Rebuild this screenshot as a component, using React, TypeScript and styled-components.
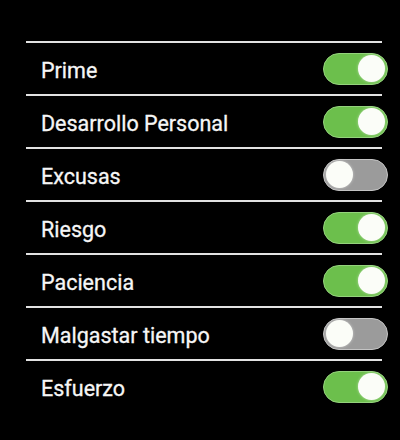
import * as React from "react";
import styled, { createGlobalStyle } from "styled-components";

const settings = [
  { label: "Prime", on: true },
  { label: "Desarrollo Personal", on: true },
  { label: "Excusas", on: false },
  { label: "Riesgo", on: true },
  { label: "Paciencia", on: true },
  { label: "Malgastar tiempo", on: false },
  { label: "Esfuerzo", on: true },
];

export default function App() {
  const [values, setValues] = React.useState(settings.map((s) => s.on));

  const flip = (i: number) =>
    setValues((v) => v.map((x, j) => (j === i ? !x : x)));

  return (
    <>
      <GlobalStyle />
      <Screen>
        <List>
          {settings.map((s, i) => (
            <Row key={s.label}>
              <Label>{s.label}</Label>
              <Toggle $on={values[i]} onClick={() => flip(i)}>
                <Knob />
              </Toggle>
            </Row>
          ))}
        </List>
      </Screen>
    </>
  );
}

const GlobalStyle = createGlobalStyle`
  html, body {
    margin: 0;
    padding: 0;
    background: #000;
  }
`;

const Screen = styled.main`
  width: 400px;
  height: 440px;
  background: #000;
  padding-top: 41px;
  box-sizing: border-box;
`;

const List = styled.ul`
  list-style: none;
  margin: 0 0 0 26px;
  padding: 0;
  width: 356px;
  border-top: solid 2px #e2e2e2;
`;

const Row = styled.li`
  display: flex;
  align-items: center;
  justify-content: space-between;
  height: 51px;
  padding: 0 0 0 15px;
  border-bottom: solid 2px #e2e2e2;

  &:last-child {
    border-bottom: none;
  }
`;

const Label = styled.span`
  font-family: Roboto, "Liberation Sans", Arial, sans-serif;
  font-size: 21.5px;
  font-weight: 400;
  color: #f6f6f6;
  margin-top: 3px;
  -webkit-text-stroke: 0.3px #f6f6f6;
`;

const Toggle = styled.button<{ $on: boolean }>`
  display: flex;
  align-items: center;
  justify-content: ${(p) => (p.$on ? "flex-end" : "flex-start")};
  width: 65px;
  height: 32px;
  margin-right: -6px;
  padding: 0 2px;
  box-sizing: border-box;
  border-radius: 16px;
  border: solid 1.5px ${(p) => (p.$on ? "#94d27c" : "#c4c4c4")};
  background: ${(p) => (p.$on ? "#6cbf4c" : "#9b9b9b")};
  cursor: pointer;
`;

const Knob = styled.span`
  width: 27px;
  height: 27px;
  border-radius: 50%;
  background: #fbfdf8;
  box-shadow: 0 0 3px rgba(255, 255, 255, 0.5);
`;
